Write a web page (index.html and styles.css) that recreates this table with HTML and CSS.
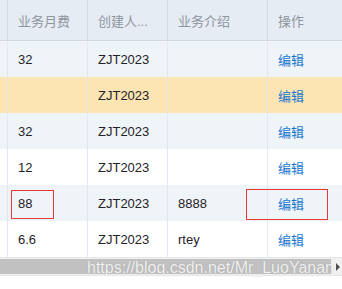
FILE: index.html
```html
<!DOCTYPE html>
<html lang="zh">
<head>
<meta charset="utf-8">
<link rel="stylesheet" href="styles.css">
</head>
<body>
<div class="table">
  <div class="row head">
    <div class="cell"></div>
    <div class="cell">业务月费</div>
    <div class="cell">创建人...</div>
    <div class="cell">业务介绍</div>
    <div class="cell">操作</div>
  </div>
  <div class="row light">
    <div class="cell"></div>
    <div class="cell">32</div>
    <div class="cell">ZJT2023</div>
    <div class="cell"></div>
    <div class="cell"><a class="link">编辑</a></div>
  </div>
  <div class="row hl">
    <div class="cell"></div>
    <div class="cell"></div>
    <div class="cell">ZJT2023</div>
    <div class="cell"></div>
    <div class="cell"><a class="link">编辑</a></div>
  </div>
  <div class="row light">
    <div class="cell"></div>
    <div class="cell">32</div>
    <div class="cell">ZJT2023</div>
    <div class="cell"></div>
    <div class="cell"><a class="link">编辑</a></div>
  </div>
  <div class="row">
    <div class="cell"></div>
    <div class="cell">12</div>
    <div class="cell">ZJT2023</div>
    <div class="cell"></div>
    <div class="cell"><a class="link">编辑</a></div>
  </div>
  <div class="row light">
    <div class="cell"></div>
    <div class="cell">88</div>
    <div class="cell">ZJT2023</div>
    <div class="cell">8888</div>
    <div class="cell"><a class="link">编辑</a></div>
  </div>
  <div class="row">
    <div class="cell"></div>
    <div class="cell">6.6</div>
    <div class="cell">ZJT2023</div>
    <div class="cell">rtey</div>
    <div class="cell"><a class="link">编辑</a></div>
  </div>
  <div class="scrollbar">
    <div class="thumb"></div>
    <div class="arrow"></div>
  </div>
</div>
<div class="mark box1"></div>
<div class="mark box2"></div>
<div class="watermark">https://blog.csdn.net/Mr_LuoYanan</div>
</body>
</html>
```
FILE: styles.css
```css
html, body {
  margin: 0;
  padding: 0;
  background: #ffffff;
}
body {
  width: 342px;
  height: 289px;
  overflow: hidden;
  position: relative;
  font-family: "Liberation Sans", "Noto Sans CJK SC", sans-serif;
  font-size: 13px;
  color: #1f2329;
}
.table {
  border-bottom: 1px solid #e3e6eb;
}
.row {
  display: grid;
  grid-template-columns: 8px 80px 80px 100px 1fr;
  height: 36px;
  background: #ffffff;
}
.row.light {
  background: #eff4f8;
}
.row.hl {
  background: #fde4b3;
}
.row.head {
  height: 40px;
  background: #e6ecf4;
  color: #8e959e;
  border-bottom: 1px solid #d3d9e2;
}
.cell {
  border-right: 1px solid #e4e8ee;
  padding: 0 10px;
  display: flex;
  align-items: center;
  white-space: nowrap;
  overflow: hidden;
  min-width: 0;
}
.cell:first-child {
  padding: 0;
}
.cell:last-child {
  border-right: none;
}
.head .cell {
  border-right-color: #d3d9e2;
}
.link {
  color: #1a78d0;
  text-decoration: none;
}
.scrollbar {
  height: 17px;
  background: #f1f1f1;
  border-top: 1px solid #e3e6eb;
  position: relative;
  display: flex;
  align-items: center;
}
.thumb {
  width: 331px;
  height: 15px;
  background: #c1c1c1;
}
.arrow {
  width: 0;
  height: 0;
  margin-left: 5px;
  border-top: 4px solid transparent;
  border-bottom: 4px solid transparent;
  border-left: 4px solid #505050;
}
.mark {
  position: absolute;
  border: 1px solid #e53935;
}
.box1 {
  left: 11px;
  top: 190px;
  width: 41px;
  height: 27px;
}
.box2 {
  left: 246px;
  top: 189px;
  width: 80px;
  height: 29px;
}
.watermark {
  position: absolute;
  left: 87px;
  top: 259px;
  font-family: "Liberation Sans", sans-serif;
  font-size: 16px;
  color: rgba(255, 255, 255, 0.85);
  text-shadow: 0 0 1px rgba(120, 120, 120, 0.5);
  white-space: nowrap;
}
```
